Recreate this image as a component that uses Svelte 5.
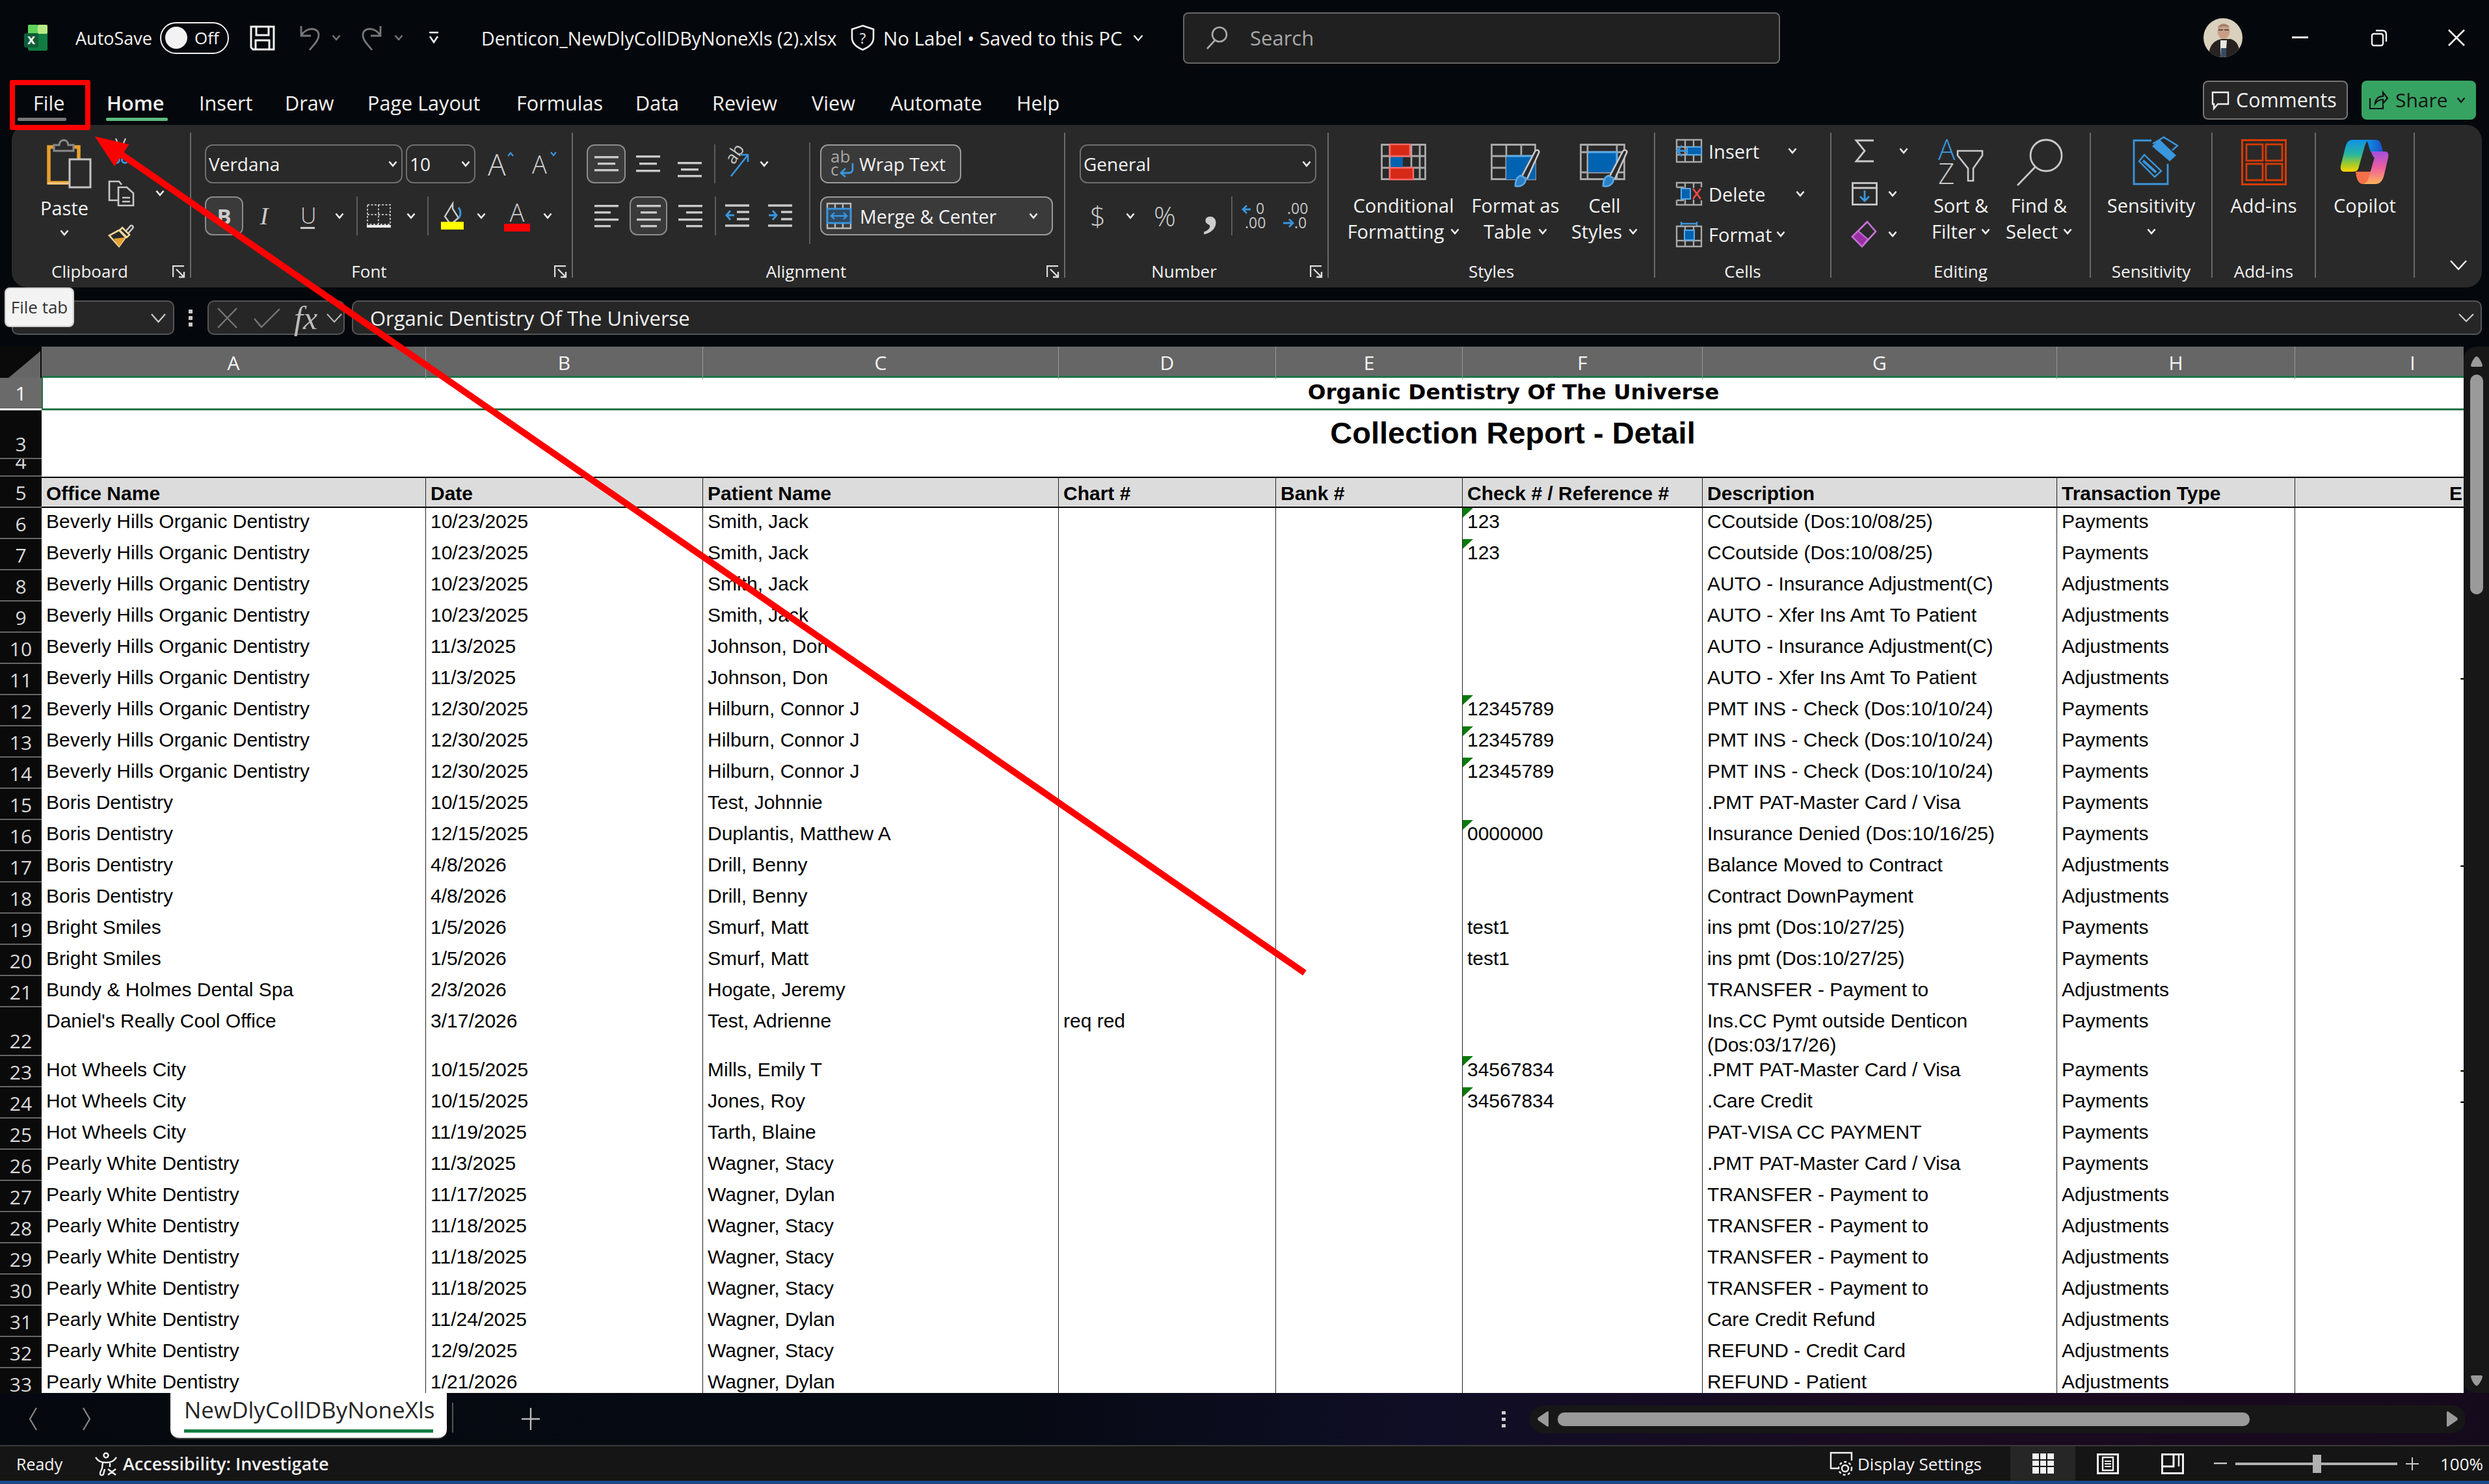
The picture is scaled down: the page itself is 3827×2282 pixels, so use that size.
<script>
  const tabs = [
    { t: 'File', x: 51, file: true }, { t: 'Home', x: 164, on: true }, { t: 'Insert', x: 306 }, { t: 'Draw', x: 438 },
    { t: 'Page Layout', x: 565 }, { t: 'Formulas', x: 794 }, { t: 'Data', x: 977 }, { t: 'Review', x: 1095 },
    { t: 'View', x: 1248 }, { t: 'Automate', x: 1369 }, { t: 'Help', x: 1563 }
  ];
  const cols = ['A', 'B', 'C', 'D', 'E', 'F', 'G', 'H', 'I'];
  const heads = ['Office Name', 'Date', 'Patient Name', 'Chart #', 'Bank #', 'Check # / Reference #', 'Description', 'Transaction Type'];
  const BH = 'Beverly Hills Organic Dentistry', PW = 'Pearly White Dentistry', HW = 'Hot Wheels City', BD = 'Boris Dentistry', BS = 'Bright Smiles';
  const AD = 'Adjustments', PA = 'Payments', TR = 'TRANSFER - Payment to';
  const rows = [
    [6, BH, '10/23/2025', 'Smith, Jack', '', '', '123', 'CCoutside (Dos:10/08/25)', PA, 1],
    [7, BH, '10/23/2025', 'Smith, Jack', '', '', '123', 'CCoutside (Dos:10/08/25)', PA, 1],
    [8, BH, '10/23/2025', 'Smith, Jack', '', '', '', 'AUTO - Insurance Adjustment(C)', AD],
    [9, BH, '10/23/2025', 'Smith, Jack', '', '', '', 'AUTO - Xfer Ins Amt To Patient', AD],
    [10, BH, '11/3/2025', 'Johnson, Don', '', '', '', 'AUTO - Insurance Adjustment(C)', AD],
    [11, BH, '11/3/2025', 'Johnson, Don', '', '', '', 'AUTO - Xfer Ins Amt To Patient', AD, 0, 1],
    [12, BH, '12/30/2025', 'Hilburn, Connor J', '', '', '12345789', 'PMT INS - Check (Dos:10/10/24)', PA, 1],
    [13, BH, '12/30/2025', 'Hilburn, Connor J', '', '', '12345789', 'PMT INS - Check (Dos:10/10/24)', PA, 1],
    [14, BH, '12/30/2025', 'Hilburn, Connor J', '', '', '12345789', 'PMT INS - Check (Dos:10/10/24)', PA, 1],
    [15, BD, '10/15/2025', 'Test, Johnnie', '', '', '', '.PMT PAT-Master Card / Visa', PA],
    [16, BD, '12/15/2025', 'Duplantis, Matthew A', '', '', '0000000', 'Insurance Denied (Dos:10/16/25)', PA, 1],
    [17, BD, '4/8/2026', 'Drill, Benny', '', '', '', 'Balance Moved to Contract', AD, 0, 1],
    [18, BD, '4/8/2026', 'Drill, Benny', '', '', '', 'Contract DownPayment', AD],
    [19, BS, '1/5/2026', 'Smurf, Matt', '', '', 'test1', 'ins pmt (Dos:10/27/25)', PA],
    [20, BS, '1/5/2026', 'Smurf, Matt', '', '', 'test1', 'ins pmt (Dos:10/27/25)', PA],
    [21, 'Bundy & Holmes Dental Spa', '2/3/2026', 'Hogate, Jeremy', '', '', '', TR, AD],
    [22, "Daniel's Really Cool Office", '3/17/2026', 'Test, Adrienne', 'req red', '', '', 'Ins.CC Pymt outside Denticon\n(Dos:03/17/26)', PA],
    [23, HW, '10/15/2025', 'Mills, Emily T', '', '', '34567834', '.PMT PAT-Master Card / Visa', PA, 1, 1],
    [24, HW, '10/15/2025', 'Jones, Roy', '', '', '34567834', '.Care Credit', PA, 1, 1],
    [25, HW, '11/19/2025', 'Tarth, Blaine', '', '', '', 'PAT-VISA CC PAYMENT', PA],
    [26, PW, '11/3/2025', 'Wagner, Stacy', '', '', '', '.PMT PAT-Master Card / Visa', PA],
    [27, PW, '11/17/2025', 'Wagner, Dylan', '', '', '', TR, AD],
    [28, PW, '11/18/2025', 'Wagner, Stacy', '', '', '', TR, AD],
    [29, PW, '11/18/2025', 'Wagner, Stacy', '', '', '', TR, AD],
    [30, PW, '11/18/2025', 'Wagner, Stacy', '', '', '', TR, AD],
    [31, PW, '11/24/2025', 'Wagner, Dylan', '', '', '', 'Care Credit Refund', AD],
    [32, PW, '12/9/2025', 'Wagner, Stacy', '', '', '', 'REFUND - Credit Card', AD],
    [33, PW, '1/21/2026', 'Wagner, Dylan', '', '', '', 'REFUND - Patient', AD]
  ];
</script>

{#snippet chev(m)}
  <svg class="ic {m}" width="14" height="10" viewBox="0 0 14 10"><path d="M1.5 1.5 7 8l5.5-6.5" fill="none" stroke="#f2f2f2" stroke-width="2.6"/></svg>
{/snippet}
{#snippet launcher()}
  <svg class="launch" width="20" height="20" viewBox="0 0 20 20"><path d="M1 18V1h17M6 6l12 12M18 10v8h-8" fill="none" stroke="#ddd" stroke-width="2.4"/></svg>
{/snippet}
{#snippet bars(m, list, h)}
  <svg class="ic {m}" width="37" height={h} viewBox="0 0 37 {h}">
    {#each list as b}<rect x={b[0]} y={b[1]} width={b[2]} height="3.4" fill="#c9c9c9"/>{/each}
  </svg>
{/snippet}

<div class="app">
  <!-- title bar -->
  <header class="titlebar">
    <svg class="ic m37" width="38" height="40" viewBox="0 0 38 40">
      <rect x="6" y="0" width="30" height="40" rx="3" fill="#107c41"/>
      <rect x="6" y="0" width="15" height="14" rx="2" fill="#5fd35a"/>
      <rect x="21" y="0" width="15" height="14" rx="2" fill="#b8e986"/>
      <rect x="0" y="13" width="22" height="22" rx="3" fill="#0e5c38"/>
      <text x="11" y="30" text-anchor="middle" class="xl">x</text>
    </svg>
    <span class="tt s27 m41 w112">AutoSave</span>
    <div class="toggle m18"><i></i><span>Off</span></div>
    <svg class="ic m32" width="40" height="39" viewBox="0 0 40 39"><path d="M2 2h35v35H5l-3-3zM10 2v13h19V2M9 37V23h21v14" fill="none" stroke="#f2f2f2" stroke-width="3"/></svg>
    <svg class="ic m34" width="35" height="40" viewBox="0 0 35 40"><path d="M5 2v15h15M5 17C12 3 33 3 32 17c-.5 8-8 14-14 22" fill="none" stroke="#777" stroke-width="2.8"/></svg>
    <svg class="ic m17" width="14" height="10" viewBox="0 0 14 10"><path d="M1.5 1.5 7 8l5.5-6.5" fill="none" stroke="#777" stroke-width="2.4"/></svg>
    <svg class="ic m31" width="35" height="40" viewBox="0 0 35 40"><path d="M30 2v15H15M30 17C23 3 2 3 3 17c.5 8 8 14 14 22" fill="none" stroke="#777" stroke-width="2.8"/></svg>
    <svg class="ic m16" width="14" height="10" viewBox="0 0 14 10"><path d="M1.5 1.5 7 8l5.5-6.5" fill="none" stroke="#777" stroke-width="2.4"/></svg>
    <svg class="ic m39" width="16" height="20" viewBox="0 0 16 20"><path d="M1 2h14M2 8l6 9 6-9" fill="none" stroke="#f2f2f2" stroke-width="2.6"/></svg>
    <span class="tt s286 m65 w547">Denticon_NewDlyCollDByNoneXls (2).xlsx</span>
    <svg class="ic m21" width="37" height="40" viewBox="0 0 37 40"><path d="M18.500 1.500 35 7v13c0 9-8 15-16.500 18.500C10 35 2 29 2 20V7z" fill="none" stroke="#f2f2f2" stroke-width="2.6"/><text x="18.500" y="29" text-anchor="middle" class="q">?</text></svg>
    <span class="tt s295 m13 w369">No Label • Saved to this PC</span>
    <svg class="ic m15" width="16" height="11" viewBox="0 0 16 11"><path d="M1.500 1.500 8 9l6.500-7.500" fill="none" stroke="#f2f2f2" stroke-width="2.4"/></svg>
    <div class="search m61">
      <svg class="ic" width="34" height="36" viewBox="0 0 34 36"><circle cx="21" cy="13" r="11" fill="none" stroke="#aaa" stroke-width="2.6"/><path d="M14 22 2 35" stroke="#aaa" stroke-width="2.6"/></svg>
      <span>Search</span>
    </div>
    <svg class="ic m651" width="60" height="60" viewBox="0 0 60 60">
      <defs><clipPath id="av"><circle cx="30" cy="30" r="30"/></clipPath></defs>
      <g clip-path="url(#av)">
        <rect width="60" height="60" fill="#d9d0bd"/>
        <path d="M8 60c0-18 8-26 20-28l14 0c10 3 14 12 14 28z" fill="#26221f"/>
        <path d="M26 34h10l-2 26h-8z" fill="#e8e8e8"/><path d="M27 46h8v14h-9z" fill="#3a4a63"/>
        <ellipse cx="31" cy="20" rx="9.500" ry="12" fill="#c89f86"/>
        <path d="M22 14c2-6 16-6 18 0-5-2-13-2-18 0z" fill="#9a7a62"/>
        <path d="M23 18h7M32 18h7" stroke="#333" stroke-width="1.500"/>
      </g>
    </svg>
    <svg class="ic m76" width="25" height="4" viewBox="0 0 25 4"><rect width="25" height="3" fill="#f2f2f2"/></svg>
    <svg class="ic m96" width="26" height="26" viewBox="0 0 26 26"><rect x="2" y="7" width="17" height="18" rx="3" fill="none" stroke="#f2f2f2" stroke-width="2.400"/><path d="M8 2h10c4 0 6 2 6 6v11" fill="none" stroke="#f2f2f2" stroke-width="2.400"/></svg>
    <svg class="ic m93" width="26" height="26" viewBox="0 0 26 26"><path d="M1 1l24 24M25 1 1 25" stroke="#f2f2f2" stroke-width="2.600"/></svg>
  </header>

  <!-- tabs -->
  <nav class="tabs">
    {#each tabs as tab, i}
      <span class="tab" class:on={tab.on} class:file={tab.file} style="width:{i < tabs.length - 1 ? tabs[i + 1].x - tab.x : 90}px">{tab.t}</span>
    {/each}
    <div class="comments"><svg class="ic" width="28" height="28" viewBox="0 0 28 28"><path d="M2 2h24v18H10l-6 7v-7H2z" fill="none" stroke="#f2f2f2" stroke-width="2.400"/></svg><span>Comments</span></div>
    <div class="share"><svg class="ic" width="30" height="30" viewBox="0 0 30 30"><path d="M2 12v16h20v-6M10 20c1-8 6-11 12-11V3l7 9-7 8v-6c-5 0-9 2-12 6z" fill="none" stroke="#121212" stroke-width="2.200"/></svg><span>Share</span><svg class="ic m14" width="14" height="10" viewBox="0 0 14 10"><path d="M1.500 1.500 7 8l5.500-6.500" fill="none" stroke="#121212" stroke-width="2.400"/></svg></div>
  </nav>

  <!-- ribbon -->
  <section class="ribbon">
    <div class="group g-clip">
      <div class="body clip">
        <div class="paste">
          <svg class="ic" width="68" height="75" viewBox="0 0 68 75">
            <path d="M3 12h46v55H3z" fill="none" stroke="#e79f2e" stroke-width="5.500"/>
            <path d="M1 68h32" stroke="#f6c784" stroke-width="3"/>
            <path d="M11 18V9h8c1-10 13-10 14 0h8v9z" fill="#2a2a2a" stroke="#8a8a8a" stroke-width="3"/>
            <rect x="35" y="31" width="32" height="43" fill="#2a2a2a" stroke="#c4c4c4" stroke-width="3"/>
          </svg>
          <div class="paste-l"><span>Paste</span>{@render chev('')}</div>
        </div>
        <div class="clip2">
          <svg class="ic m7" width="25" height="39" viewBox="0 0 25 39"><path d="M5 0l12 28M20 0 8 28" stroke="#c8c8c8" stroke-width="2.200"/><circle cx="6" cy="33" r="4.500" fill="none" stroke="#3a96dd" stroke-width="3"/><circle cx="19" cy="33" r="4.500" fill="none" stroke="#3a96dd" stroke-width="3"/></svg>
          <div class="copyrow">
            <svg class="ic" width="40" height="40" viewBox="0 0 40 40"><path d="M15 31H2V2h15l4 5M16 11h13l10 9v19H16z" fill="#2a2a2a" stroke="#c8c8c8" stroke-width="2.600"/><path d="M22 27h12M22 33h12" stroke="#c8c8c8" stroke-width="2.600"/></svg>
            {@render chev('m33')}
          </div>
          <svg class="ic" width="40" height="38" viewBox="0 0 40 38"><path d="M27 13l7-8c2-3 6 0 4 3l-7 8" fill="none" stroke="#c8c8c8" stroke-width="2.600"/><path d="M22 7 33 18l-4 4L18 11z" fill="none" stroke="#f0d79a" stroke-width="2.600"/><path d="M17 11 2 19l15 17 10-14z" fill="none" stroke="#f0d79a" stroke-width="2.600"/><path d="M9 24l18-2-10 14z" fill="#e79f2e"/></svg>
        </div>
      </div>
      <div class="glabel lp34">Clipboard</div>
      {@render launcher()}
    </div>

    <div class="group g-font">
      <div class="body pad21">
        <div class="row60">
          <div class="box w304"><span>Verdana</span>{@render chev('')}</div>
          <div class="box w107 m5"><span>10</span>{@render chev('')}</div>
          <span class="bigA m19 w38">A<svg class="caret" width="10" height="8" viewBox="0 0 10 8"><path d="M1 7l4-5 4 5" fill="none" stroke="#3a96dd" stroke-width="2.200"/></svg></span>
          <span class="smA m30 w36">A<svg class="caret" width="10" height="8" viewBox="0 0 10 8"><path d="M1 1l4 5 4-5" fill="none" stroke="#3a96dd" stroke-width="2.200"/></svg></span>
        </div>
        <div class="row60 mt20">
          <div class="toggled w59 bold-b">B</div>
          <span class="italic m22 w20">I</span>
          <span class="under m46 w22">U</span>
          {@render chev('m31')}
          <i class="vsep m19"></i>
          <svg class="ic m14" width="37" height="37" viewBox="0 0 37 37"><rect x="1" y="1" width="35" height="30" fill="none" stroke="#bbb" stroke-width="2" stroke-dasharray="3 2.500"/><path d="M18 1v30M1 16h35" stroke="#bbb" stroke-width="2" stroke-dasharray="3 2.500"/><rect y="32" width="37" height="4" fill="#f2f2f2"/></svg>
          {@render chev('m24')}
          <i class="vsep m18"></i>
          <svg class="ic m19" width="35" height="42" viewBox="0 0 35 42"><path d="M18 2 6 22l9 12 12-10L18 10z" fill="none" stroke="#ccc" stroke-width="2.400"/><path d="M27 8c3 4 4 10 1 16" fill="none" stroke="#3a96dd" stroke-width="3"/><rect x="0" y="30" width="35" height="12" fill="#ffff00"/></svg>
          {@render chev('m20')}
          <div class="fcolor m28"><span>A</span><i></i></div>
          {@render chev('m20')}
        </div>
      </div>
      <div class="glabel lp38">Font</div>
      {@render launcher()}
    </div>

    <div class="group g-align">
      <div class="body pad21 alignbody">
        <div class="alignL">
          <div class="row60">
            <div class="toggled w60">{@render bars('', [[0,0,37],[5,10,27],[0,20,37]], 24)}</div>
            {@render bars('m16', [[0,0,37],[5,11,27],[0,22,37]], 26)}
            {@render bars('m27 low', [[0,0,37],[5,10,27],[0,20,37]], 24)}
            <i class="vsep m19"></i>
            <svg class="ic m14" width="40" height="40" viewBox="0 0 40 40"><text x="10" y="22" class="abrot" transform="rotate(-55 12 18)">ab</text><path d="M10 39 36 6M25 6h11v11" fill="none" stroke="#3a96dd" stroke-width="2.600"/></svg>
            {@render chev('m14')}
          </div>
          <div class="row60 mt20">
            {@render bars('m12', [[0,0,37],[0,10,25],[0,21,37],[0,31,25]], 35)}
            <div class="toggled w58 m17">{@render bars('', [[0,0,37],[6,10,25],[0,21,37],[6,31,25]], 35)}</div>
            {@render bars('m17', [[0,0,37],[12,10,25],[0,21,37],[12,31,25]], 35)}
            <i class="vsep m19"></i>
            <svg class="ic m14" width="37" height="36" viewBox="0 0 37 36"><path d="M0 2h37M18 12h19M18 23h19M0 33h37" stroke="#c9c9c9" stroke-width="3.400"/><path d="M14 17H3M8 10l-6 7 6 7" fill="none" stroke="#3a96dd" stroke-width="3"/></svg>
            <svg class="ic m29" width="37" height="36" viewBox="0 0 37 36"><path d="M0 2h37M20 12h17M20 23h17M0 33h37" stroke="#c9c9c9" stroke-width="3.400"/><path d="M1 17h11M7 10l6 7-6 7" fill="none" stroke="#3a96dd" stroke-width="3"/></svg>
          </div>
        </div>
        <i class="vsep-tall"></i>
        <div class="alignR">
          <div class="btnline w217">
            <svg class="ic m14" width="38" height="42" viewBox="0 0 38 42"><text x="0" y="19" class="wrp">ab</text><text x="0" y="39" class="wrp">c</text><path d="M34 20v9c0 5-3 6-7 6H17M23 28l-7 7 7 6" fill="none" stroke="#3a96dd" stroke-width="2.800"/></svg>
            <span class="m6">Wrap Text</span>
          </div>
          <div class="btnline w358 mt20">
            <svg class="ic m8" width="38" height="40" viewBox="0 0 38 40"><path d="M1 1h36v38H1zM13 1v8M25 1v8M13 31v8M25 31v8" fill="none" stroke="#bbb" stroke-width="2.400"/><rect x="1" y="9" width="36" height="22" fill="#2f4a63" stroke="#3a96dd" stroke-width="2.800"/><path d="M7 20h24M12 15l-5 5 5 5M26 15l5 5-5 5" fill="none" stroke="#3a96dd" stroke-width="2.400"/></svg>
            <span class="m13 w260 s286">Merge &amp; Center</span>
            {@render chev('')}
          </div>
        </div>
      </div>
      <div class="glabel lp38">Alignment</div>
      {@render launcher()}
    </div>

    <div class="group g-num">
      <div class="body pad22">
        <div class="row60"><div class="box w364"><span>General</span>{@render chev('')}</div></div>
        <div class="row60 mt20">
          <span class="sym m15 w26">$</span>
          {@render chev('m30')}
          <span class="sym m25 w42">%</span>
          <span class="comma m38 w20">,</span>
          <i class="vsep m23"></i>
          <svg class="ic m14" width="37" height="42" viewBox="0 0 37 42"><path d="M14 11H2M8 5 2 11l6 6" fill="none" stroke="#3a96dd" stroke-width="2.800"/><text x="22" y="18" class="dec">0</text><text x="5" y="40" class="dec">.00</text></svg>
          <svg class="ic m27" width="38" height="42" viewBox="0 0 38 42"><text x="6" y="18" class="dec">.00</text><path d="M0 32h14M9 26l6 6-6 6" fill="none" stroke="#3a96dd" stroke-width="2.800"/><text x="17" y="40" class="dec">.0</text></svg>
        </div>
      </div>
      <div class="glabel lp38">Number</div>
      {@render launcher()}
    </div>

    <div class="group g-styles">
      <div class="body flexr pad42">
        <div class="big pt17 w146">
          <div class="big-ico h75">
            <svg class="ic" width="70" height="56" viewBox="0 0 70 56"><path d="M1.500 1.500h67v53h-67zM14 1v54M47 1v54M60 1v54M1 19h68M1 37h68" fill="none" stroke="#a9a9a9" stroke-width="2.800"/><rect x="14" y="1" width="31" height="18" fill="#d62a17" stroke="#ff6b6b" stroke-width="2.400"/><rect x="15" y="21" width="19" height="15" fill="#0063b1"/><rect x="14" y="37" width="36" height="18" fill="#d62a17" stroke="#ff6b6b" stroke-width="2.400"/></svg>
          </div>
          <div class="l2">Conditional</div>
          <div class="l2">Formatting{@render chev('m10')}</div>
        </div>
        <div class="big pt17 w156 m21">
          <div class="big-ico h75">
            <svg class="ic" width="76" height="67" viewBox="0 0 76 67"><path d="M1.500 1.500h67v53h-67zM24 1v54M47 1v54M1 19h68M1 37h68" fill="none" stroke="#a9a9a9" stroke-width="2.800"/><rect x="24" y="19" width="45" height="36" fill="#0063b1"/><path d="M24 19h45" stroke="#5aa9e6" stroke-width="3"/><path d="M48 50 68 12c2-4 8-2 6 2L56 54" fill="#2a2a2a" stroke="#c8c8c8" stroke-width="2.600"/><path d="M46 49c-6 2-8 8-8 16 8 2 16-2 16-12z" fill="#2a7fc8" stroke="#5aa9e6" stroke-width="2.600"/></svg>
          </div>
          <div class="l2">Format as</div>
          <div class="l2">Table{@render chev('m10')}</div>
        </div>
        <div class="big pt17 w118">
          <div class="big-ico h75">
            <svg class="ic" width="76" height="67" viewBox="0 0 76 67"><path d="M1.500 1.500h67v53h-67zM12 1v54M57 1v54M1 13h68M1 44h68" fill="none" stroke="#a9a9a9" stroke-width="2.800"/><rect x="13" y="13" width="44" height="31" fill="#0063b1"/><path d="M13 13h44v31" fill="none" stroke="#5aa9e6" stroke-width="3"/><path d="M46 50 66 12c2-4 8-2 6 2L54 54" fill="#2a2a2a" stroke="#c8c8c8" stroke-width="2.600"/><path d="M44 49c-6 2-8 8-8 16 8 2 16-2 16-12z" fill="#2a7fc8" stroke="#5aa9e6" stroke-width="2.600"/></svg>
          </div>
          <div class="l2">Cell</div>
          <div class="l2">Styles{@render chev('m10')}</div>
        </div>
      </div>
      <div class="glabel">Styles</div>
    </div>

    <div class="group g-cells">
      <div class="body cells">
        <div class="cellrow">
          <svg class="ic m32" width="40" height="36" viewBox="0 0 40 36"><path d="M1 1h38v34H1zM14 1v34M27 1v34M1 12h38M1 24h38" fill="none" stroke="#a9a9a9" stroke-width="2.400"/><rect x="17" y="12" width="22" height="12" fill="#0063b1" stroke="#5aa9e6" stroke-width="2"/><path d="M17 18H2M9 10 2 18l7 8" fill="none" stroke="#3a96dd" stroke-width="3"/></svg>
          <span class="m10 w122">Insert</span>{@render chev('')}
        </div>
        <div class="cellrow mt30">
          <svg class="ic m32" width="40" height="36" viewBox="0 0 40 36"><path d="M1 8V1h38v7M1 28v7h38v-7M14 1v8M27 1v8M14 27v8M27 27v8M1 8h11M1 28h11" fill="none" stroke="#a9a9a9" stroke-width="2.400"/><rect x="8" y="10" width="14" height="16" fill="#0063b1" stroke="#5aa9e6" stroke-width="2"/><path d="M26 10l12 16M38 10 26 26" stroke="#f04a4a" stroke-width="2.800"/></svg>
          <span class="m10 w134">Delete</span>{@render chev('')}
        </div>
        <div class="cellrow mt26">
          <svg class="ic m32" width="40" height="40" viewBox="0 0 40 40"><path d="M8 1v8M32 1v8M8 4h24" fill="none" stroke="#3a96dd" stroke-width="2.400"/><path d="M1 8h38v31H1zM14 8v31M27 8v31M1 30h38" fill="none" stroke="#a9a9a9" stroke-width="2.400"/><rect x="13" y="14" width="15" height="15" fill="#0063b1" stroke="#5aa9e6" stroke-width="2"/></svg>
          <span class="m10 w104">Format</span>{@render chev('')}
        </div>
      </div>
      <div class="glabel">Cells</div>
    </div>

    <div class="group g-edit">
      <div class="body flexr">
        <div class="editL">
          <div class="cellrow">
            <svg class="ic m36" width="30" height="36" viewBox="0 0 30 36"><path d="M29 2H2l13 16L2 34h27" fill="none" stroke="#c9c9c9" stroke-width="2.800"/></svg>
            {@render chev('m38')}
          </div>
          <div class="cellrow mt30">
            <svg class="ic m31" width="40" height="36" viewBox="0 0 40 36"><rect x="1.500" y="1.500" width="37" height="33" fill="none" stroke="#c9c9c9" stroke-width="2.800"/><path d="M1 9h38" stroke="#c9c9c9" stroke-width="2.800"/><path d="M20 13v16M13 22l7 7 7-7" fill="none" stroke="#3a96dd" stroke-width="2.800"/></svg>
            {@render chev('m16')}
          </div>
          <div class="cellrow mt26">
            <svg class="ic m31" width="38" height="40" viewBox="0 0 38 40"><path d="M24 1 37 16 16 39 1 24z" fill="none" stroke="#c774d6" stroke-width="2.600"/><path d="M10 15 25 28 16 39 1 24z" fill="#9a2fa8" stroke="#c774d6" stroke-width="2"/></svg>
            {@render chev('m18')}
          </div>
        </div>
        <div class="big pt11 w110">
          <div class="big-ico h81">
            <svg class="ic" width="70" height="69" viewBox="0 0 70 69"><text x="0" y="31" class="az blue">A</text><text x="0" y="68" class="az">Z</text><path d="M30 17h38v7L54 44v19h-8V44L30 24z" fill="none" stroke="#c9c9c9" stroke-width="2.600"/></svg>
          </div>
          <div class="l2">Sort &amp;</div>
          <div class="l2">Filter{@render chev('m8')}</div>
        </div>
        <div class="big pt10 w130">
          <div class="big-ico h82">
            <svg class="ic" width="71" height="72" viewBox="0 0 71 72"><ellipse cx="46" cy="25" rx="24" ry="24" fill="none" stroke="#c9c9c9" stroke-width="2.800"/><path d="M29 43 2 71" stroke="#c9c9c9" stroke-width="2.800"/></svg>
          </div>
          <div class="l2">Find &amp;</div>
          <div class="l2">Select{@render chev('m8')}</div>
        </div>
      </div>
      <div class="glabel">Editing</div>
    </div>

    <div class="group g-sens">
      <div class="body">
        <div class="big pt6">
          <div class="big-ico h86">
            <svg class="ic m14" width="70" height="74" viewBox="0 0 70 74"><path d="M28 6H1v67h52V42" fill="none" stroke="#3a96dd" stroke-width="2.800"/><path d="M30 11 47 1l21 13-8 7" fill="none" stroke="#3a96dd" stroke-width="2.400"/><path d="M29 15 56 38 66 29 40 4z" fill="#3a96dd"/><path d="M9 38 17 28 43 53 33 62z" fill="#2a2a2a" stroke="#3a96dd" stroke-width="2.400"/><path d="M15 37l20 18" stroke="#3a96dd" stroke-width="4"/></svg>
          </div>
          <div class="l2">Sensitivity</div>
          <div class="l2">{@render chev('')}</div>
        </div>
      </div>
      <div class="glabel">Sensitivity</div>
    </div>

    <div class="group g-add">
      <div class="body">
        <div class="big pt10">
          <div class="big-ico h82">
            <svg class="ic" width="70" height="71" viewBox="0 0 70 71"><rect x="1.500" y="1.500" width="67" height="68" fill="none" stroke="#d83b01" stroke-width="3"/><g fill="none" stroke="#d83b01" stroke-width="2.800"><rect x="8" y="8" width="25" height="25"/><rect x="38" y="8" width="25" height="25"/><rect x="8" y="38" width="25" height="25"/><rect x="38" y="38" width="25" height="25"/></g></svg>
          </div>
          <div class="l2">Add-ins</div>
        </div>
      </div>
      <div class="glabel">Add-ins</div>
    </div>

    <div class="group g-cop">
      <div class="body">
        <div class="big pt11">
          <div class="big-ico h81">
            <svg class="ic" width="74" height="68" viewBox="0 0 74 68">
              <defs>
                <linearGradient id="c1" x1="0" y1="0" x2="0" y2="1"><stop offset="0" stop-color="#1092e6"/><stop offset=".45" stop-color="#28b5a0"/><stop offset=".75" stop-color="#9ccb2e"/><stop offset="1" stop-color="#ffd400"/></linearGradient>
                <linearGradient id="c2" x1="0" y1="0" x2="0" y2="1"><stop offset="0" stop-color="#a44ee0"/><stop offset=".5" stop-color="#ee5f9c"/><stop offset="1" stop-color="#ffb35a"/></linearGradient>
                <linearGradient id="c3" x1="0" y1="0" x2="1" y2="0"><stop offset="0" stop-color="#1092e6"/><stop offset="1" stop-color="#1b4fc4"/></linearGradient>
              </defs>
              <path d="M40 0h14c7 0 8 6 11 18H46C42 8 42 3 40 0z" fill="url(#c3)"/>
              <path d="M23 49h30c-2 10-4 19-16 19H34c-8 0-10-10-11-19z" fill="#f5704a"/>
              <path d="M18 0h26c-4 1-6 6-8 13l-8 28c-1 5-3 8-9 8H6c-5 0-7-4-6-9L7 12C9 4 12 0 18 0z" fill="url(#c1)"/>
              <path d="M46 18h22c5 0 6 4 5 9l-6 26c-2 9-6 15-14 15H34c6-1 8-6 10-13l8-28c-2 1-4-7-6-9z" fill="url(#c2)"/>
            </svg>
          </div>
          <div class="l2">Copilot</div>
        </div>
      </div>
    </div>
    <div class="expander"><svg class="ic" width="26" height="16" viewBox="0 0 26 16"><path d="M1 1l12 13L25 1" fill="none" stroke="#f2f2f2" stroke-width="2.400"/></svg></div>
  </section>

  <!-- formula bar -->
  <div class="fbar">
    <div class="fbox namebox"><svg class="ic" width="23" height="14" viewBox="0 0 23 14"><path d="M1 1l10.500 12L22 1" fill="none" stroke="#ccc" stroke-width="2.200"/></svg></div>
    <svg class="ic m22" width="6" height="26" viewBox="0 0 6 26"><rect width="6" height="6" fill="#c9c9c9"/><rect y="10" width="6" height="6" fill="#c9c9c9"/><rect y="20" width="6" height="6" fill="#c9c9c9"/></svg>
    <div class="fbox btnbox m23">
      <svg class="ic m13" width="31" height="32" viewBox="0 0 31 32"><path d="M1 1l29 30M30 1 1 31" stroke="#777" stroke-width="2.400"/></svg>
      <svg class="ic m25" width="41" height="30" viewBox="0 0 41 30"><path d="M1 16l11 13L40 1" fill="none" stroke="#777" stroke-width="2.400"/></svg>
      <span class="fx m21">fx</span>
      <svg class="ic m13" width="24" height="14" viewBox="0 0 24 14"><path d="M1 1l11 12L23 1" fill="none" stroke="#bbb" stroke-width="2"/></svg>
    </div>
    <div class="fbox finput m11"><span>Organic Dentistry Of The Universe</span><svg class="ic" width="24" height="14" viewBox="0 0 24 14"><path d="M1 1l11 11L23 1" fill="none" stroke="#ccc" stroke-width="2.200"/></svg></div>
  </div>

  <!-- sheet -->
  <div class="sheetwrap">
    <div class="sheet">
      <div class="grow colhead">
        <div class="corner"><svg width="50" height="42" viewBox="0 0 50 42"><path d="M50 0V42H0z" fill="#666"/></svg></div>
        {#each cols as c}<div class="ch">{c}</div>{/each}
        <div class="ch"></div>
      </div>
      <div class="grow r1">
        <div class="rh sel">1</div>
        <div class="title1">Organic Dentistry Of The Universe</div>
      </div>
      <div class="grow r2"><div class="rh"></div><div class="blank"></div></div>
      <div class="grow r3">
        <div class="rh">3</div>
        <div class="title2">Collection Report - Detail</div>
      </div>
      <div class="grow r4"><div class="rh">4</div><div class="blank"></div></div>
      <div class="grow r5">
        <div class="rh">5</div>
        {#each heads as h}<div class="hc">{h}</div>{/each}
        <div class="hc hcE">E</div>
        <div class="hc"></div>
      </div>
      {#each rows as r}
        <div class="grow data" class:tall={r[0] === 22}>
          <div class="rh">{r[0]}</div>
          {#each r.slice(1, 9) as v, j}
            <div class="dc" class:tri={j === 5 && r[9]}>{v}</div>
          {/each}
          <div class="dc dash">{r[10] ? '-' : ''}</div>
          <div class="dc"></div>
        </div>
      {/each}
    </div>
    <div class="vscroll">
      <svg class="ic" width="20" height="17" viewBox="0 0 20 17"><path d="M10 1c3 0 8 9 9 14 0 1-1 2-2 2H3c-1 0-2-1-2-2C2 10 7 1 10 1z" fill="#9a9a9a"/></svg>
      <div class="vthumb"></div>
      <svg class="ic vdown" width="20" height="17" viewBox="0 0 20 17"><path d="M10 16c-3 0-8-9-9-14 0-1 1-2 2-2h14c1 0 2 1 2 2-1 5-6 14-9 14z" fill="#9a9a9a"/></svg>
    </div>
  </div>

  <!-- sheet tabs -->
  <div class="sheettabs">
    <svg class="ic m44" width="14" height="36" viewBox="0 0 14 36"><path d="M12 1 2 18l10 17" fill="none" stroke="#888" stroke-width="2.200"/></svg>
    <svg class="ic m68" width="14" height="36" viewBox="0 0 14 36"><path d="M2 1l10 17L2 35" fill="none" stroke="#888" stroke-width="2.200"/></svg>
    <div class="stab m122"><span>NewDlyCollDByNoneXls</span><i></i></div>
    <i class="tabsep m8"></i>
    <svg class="ic m102" width="34" height="34" viewBox="0 0 34 34"><path d="M17 0v34M3 17h28" stroke="#bbb" stroke-width="2.400"/></svg>
    <svg class="ic m1476" width="6" height="25" viewBox="0 0 6 25"><rect width="6" height="5" fill="#ccc"/><rect y="10" width="6" height="5" fill="#ccc"/><rect y="20" width="6" height="5" fill="#ccc"/></svg>
    <div class="hscroll m37">
      <svg class="ic m12" width="18" height="24" viewBox="0 0 18 24"><path d="M17 1v22c0 1-2 1-3 0L1 14c-1-1-1-3 0-4L14 1c1-1 3-1 3 0z" fill="#9a9a9a"/></svg>
      <div class="hthumb m13"></div>
      <svg class="ic m303" width="17" height="24" viewBox="0 0 17 24"><path d="M0 1v22c0 1 2 1 3 0l13-9c1-1 1-3 0-4L3 1C2 0 0 0 0 1z" fill="#9a9a9a"/></svg>
    </div>
  </div>

  <!-- status bar -->
  <footer class="status">
    <span class="ready w120">Ready</span>
    <svg class="ic" width="36" height="36" viewBox="0 0 36 36"><circle cx="18" cy="5" r="3.500" fill="none" stroke="#f2f2f2" stroke-width="2.400"/><path d="M2 8c4 6 8 8 16 8s12-2 16-8M13 16l-1 8c-1 5-4 6-3 10 1 2 4 2 5 0l2-8M24 17v6M21 26l12 9M33 26l-12 9" fill="none" stroke="#f2f2f2" stroke-width="2.400"/></svg>
    <span class="acc m8">Accessibility: Investigate</span>
    <div class="statusR">
      <svg class="ic" width="36" height="38" viewBox="0 0 36 38"><path d="M13 26H2V2h32v12" fill="none" stroke="#f2f2f2" stroke-width="2.400"/><circle cx="24" cy="26" r="5" fill="none" stroke="#f2f2f2" stroke-width="2.400"/><circle cx="24" cy="26" r="10" fill="none" stroke="#f2f2f2" stroke-width="2.400" stroke-dasharray="4 3.500"/></svg>
      <span class="m7 w188">Display Settings</span>
      <div class="viewon m47"><svg class="ic" width="33" height="31" viewBox="0 0 33 31"><path d="M0 0h33v31H0z" fill="#f2f2f2"/><path d="M11 0v31M22 0v31M0 10h33M0 20h33" stroke="#151515" stroke-width="2"/></svg></div>
      <svg class="ic m33" width="34" height="32" viewBox="0 0 34 32"><path d="M1.500 1.500h31v29h-31z" fill="none" stroke="#f2f2f2" stroke-width="3"/><path d="M9 6h16v20H9z" fill="none" stroke="#f2f2f2" stroke-width="2.400"/><path d="M12 12h10M12 16h10M12 20h10" stroke="#f2f2f2" stroke-width="2"/></svg>
      <svg class="ic m65" width="35" height="32" viewBox="0 0 35 32"><path d="M1.500 1.500h32v29h-32zM1 20h18V1" fill="none" stroke="#f2f2f2" stroke-width="3"/><path d="M27 1v19" stroke="#f2f2f2" stroke-width="2.400"/></svg>
      <svg class="ic m46" width="20" height="3" viewBox="0 0 20 3"><rect width="20" height="2.400" fill="#c9c9c9"/></svg>
      <div class="slider m13"><i></i></div>
      <svg class="ic m13" width="20" height="20" viewBox="0 0 20 20"><path d="M10 0v20M0 10h20" stroke="#c9c9c9" stroke-width="2"/></svg>
      <span class="m33 w64">100%</span>
    </div>
  </footer>
  <div class="strip"></div>

  <!-- annotation overlay -->
  <div class="redbox"></div>
  <svg class="arrow" width="3827" height="2282" viewBox="0 0 3827 2282">
    <path d="M176 230 2006 1496" stroke="#ff0000" stroke-width="10"/>
    <path d="M149 212 196 223 176 253z" fill="#ff0000" stroke="#ff0000" stroke-width="3"/>
  </svg>
  <div class="tooltip">File tab</div>
</div>

<style>
  :global(body) { margin: 0; background: #05080d; }
  .app {
    position: relative; width: 3827px; height: 2282px; overflow: hidden; color: #f2f2f2;
    font-family: "Open Sans", "Noto Sans", sans-serif; font-size: 29px;
    background:
      linear-gradient(180deg, #04070b 0%, #04070b 62%, rgba(4,7,11,0) 92%),
      linear-gradient(90deg, #05090f 0%, #060a12 40%, #0f0e26 57%, #1a0a20 78%, #150a1c 100%);
  }
  .ic { display: block; flex: none; overflow: visible; }
  i { display: block; }
  .m5{margin-left:5px}.m6{margin-left:6px}.m7{margin-left:7px}.m8{margin-left:8px}.m10{margin-left:10px}.m11{margin-left:11px}.m12{margin-left:12px}.m13{margin-left:13px}.m14{margin-left:14px}.m15{margin-left:15px}.m16{margin-left:16px}.m17{margin-left:17px}.m18{margin-left:18px}.m19{margin-left:19px}.m20{margin-left:20px}.m21{margin-left:21px}.m22{margin-left:22px}.m23{margin-left:23px}.m24{margin-left:24px}.m25{margin-left:25px}.m27{margin-left:27px}.m28{margin-left:28px}.m29{margin-left:29px}.m30{margin-left:30px}.m31{margin-left:31px}.m32{margin-left:32px}.m33{margin-left:33px}.m34{margin-left:34px}.m36{margin-left:36px}.m37{margin-left:37px}.m38{margin-left:38px}.m39{margin-left:39px}.m41{margin-left:41px}.m44{margin-left:44px}.m46{margin-left:46px}.m47{margin-left:47px}.m61{margin-left:61px}.m65{margin-left:65px}.m68{margin-left:68px}.m76{margin-left:76px}.m93{margin-left:93px}.m96{margin-left:96px}.m102{margin-left:102px}.m122{margin-left:122px}.m303{margin-left:303px}.m651{margin-left:651px}.m1476{margin-left:1476px}
  .w20{width:20px}.w22{width:22px}.w26{width:26px}.w36{width:36px}.w38{width:38px}.w42{width:42px}.w58{width:58px}.w59{width:59px}.w60{width:60px}.w64{width:64px}.w104{width:104px}.w107{width:107px}.w110{width:110px}.w112{width:112px}.w118{width:118px}.w120{width:120px}.w122{width:122px}.w130{width:130px}.w134{width:134px}.w146{width:146px}.w156{width:156px}.w188{width:188px}.w217{width:217px}.w260{width:260px}.w304{width:304px}.w358{width:358px}.w364{width:364px}.w369{width:369px}.w547{width:547px}
  .mt20{margin-top:20px}.mt26{margin-top:26px}.mt30{margin-top:30px}
  .s27{font-size:27px}.s286{font-size:28.6px}.s295{font-size:29.5px}

  .titlebar { height: 116px; display: flex; align-items: center; }
  .tt { flex: none; white-space: nowrap; }
  .xl { fill: #fff; font: bold 22px "Liberation Sans", sans-serif; }
  .q { fill: #f2f2f2; font: 22px "Open Sans", sans-serif; }
  .toggle { flex: none; box-sizing: border-box; width: 106px; height: 49px; border: 2.5px solid #f2f2f2; border-radius: 25px; display: flex; align-items: center; padding-left: 6px; }
  .toggle i { width: 34px; height: 34px; border-radius: 50%; background: #f2f2f2; }
  .toggle span { margin-left: 11px; font-size: 26px; }
  .search { flex: none; box-sizing: border-box; width: 918px; height: 79px; background: #202020; border: 2.5px solid #666; border-radius: 8px; display: flex; align-items: center; padding-left: 33px; color: #a8a8a8; }
  .search span { margin-left: 34px; font-size: 31px; }

  .tabs { height: 76px; display: flex; align-items: center; padding-left: 51px; padding-right: 20px; position: relative; }
  .tab { flex: none; font-size: 30.6px; line-height: 40px; margin-top: 7px; box-sizing: border-box; position: relative; }
  .tab.on { font-weight: 600; }
  .tab.on::after { content: ''; position: absolute; left: -1px; top: 43px; width: 95px; height: 5px; border-radius: 2px; background: #5fbb7f; }
  .tab.file::after { content: ''; position: absolute; left: -24px; top: 43px; width: 75px; height: 5px; border-radius: 2px; background: #777; }
  .comments { margin-left: auto; box-sizing: border-box; width: 223px; height: 60px; margin-top: -1px; border: 2.5px solid #777; border-radius: 8px; background: #262626; display: flex; align-items: center; padding-left: 11px; gap: 10px; font-size: 30.4px; flex: none; }
  .share { margin-left: 21px; box-sizing: border-box; width: 176px; height: 60px; margin-top: -1px; border-radius: 8px; background: #37a362; color: #121212; display: flex; align-items: center; padding-left: 11px; gap: 11px; font-size: 30px; flex: none; }
  .share .m14 { margin-left: 2px; }

  .ribbon { box-sizing: border-box; margin: 0 11px 0 18px; height: 250px; border-radius: 24px; background: #292929; display: flex; padding-top: 12px; }
  .group { flex: none; position: relative; box-sizing: border-box; height: 223px; border-right: 2.5px solid #6a6a6a; display: flex; flex-direction: column; }
  .g-clip{width:276px}.g-font{width:587px}.g-align{width:757px}.g-num{width:405px}.g-styles{width:502px}.g-cells{width:271px}.g-edit{width:399px}.g-sens{width:187px}.g-add{width:159px}.g-cop{width:152px}
  .body { height: 198px; box-sizing: border-box; flex: none; }
  .glabel { height: 25px; line-height: 30px; font-size: 26px; text-align: center; white-space: nowrap; }
  .lp34 { padding-right: 34px; } .lp38 { padding-right: 38px; }
  .launch { position: absolute; right: 7px; bottom: -1px; }
  .pad21 { padding: 18px 0 0 21px; } .pad22 { padding: 18px 0 0 22px; } .pad42 { padding-left: 42px; }
  .flexr { display: flex; }
  .row60 { display: flex; align-items: center; height: 60px; }
  .box { flex: none; box-sizing: border-box; height: 60px; border: 2.5px solid #6e6e6e; border-radius: 12px; display: flex; align-items: center; justify-content: space-between; padding: 0 6px 0 4px; font-size: 28px; }
  .toggled { flex: none; box-sizing: border-box; height: 60px; border: 2.5px solid #8c8c8c; border-radius: 12px; background: #3a3a3a; display: flex; align-items: center; justify-content: center; }
  .bold-b { font: bold 33px "Open Sans", sans-serif; color: #ccc; }
  .bigA { flex: none; font-size: 46px; font-weight: 300; color: #d0d0d0; position: relative; line-height: 46px; }
  .smA { flex: none; font-size: 38px; font-weight: 300; color: #d0d0d0; position: relative; line-height: 46px; }
  .caret { position: absolute; right: -2px; top: 4px; }
  .italic { flex: none; text-align: center; font: italic 38px "Liberation Serif", serif; color: #ccc; }
  .under { flex: none; text-align: center; font-size: 34px; font-weight: 300; color: #ccc; border-bottom: 3px solid #ccc; line-height: 36px; }
  .vsep { flex: none; width: 2px; height: 60px; background: #5c5c5c; }
  .vsep-tall { flex: none; width: 2px; height: 156px; margin-top: -3px; background: #5c5c5c; }
  .fcolor { flex: none; width: 40px; display: flex; flex-direction: column; align-items: center; color: #ccc; font-size: 38px; font-weight: 300; line-height: 36px; }
  .fcolor i { width: 40px; height: 12px; background: #f00; }
  .alignbody { display: flex; }
  .alignL { width: 342px; flex: none; }
  .alignR { margin-left: 15px; }
  .low { margin-top: 18px; }
  .abrot { fill: #c9c9c9; font: 26px "Open Sans", sans-serif; }
  .wrp { fill: #a8a8a8; font: 26px "Open Sans", sans-serif; }
  .btnline { box-sizing: border-box; height: 60px; border: 2.5px solid #9a9a9a; border-radius: 12px; background: #3a3a3a; display: flex; align-items: center; font-size: 28px; white-space: nowrap; }
  .sym { flex: none; text-align: center; font-size: 42px; font-weight: 300; color: #ccc; line-height: 50px; }
  .comma { flex: none; text-align: center; font: bold 92px "Liberation Serif", serif; color: #ccc; line-height: 40px; margin-top: -34px; }
  .dec { fill: #c4c4c4; font: 23px "Open Sans", sans-serif; }
  .big { box-sizing: border-box; display: flex; flex-direction: column; align-items: center; flex: none; white-space: nowrap; }
  .pt6{padding-top:6px}.pt10{padding-top:10px}.pt11{padding-top:11px}.pt17{padding-top:17px}
  .big-ico { width: 100%; display: flex; justify-content: center; }
  .h75{height:75px}.h81{height:81px}.h82{height:82px}.h86{height:86px}
  .l2 { height: 40px; line-height: 40px; display: flex; align-items: center; justify-content: center; }
  .clip { display: flex; padding-left: 54px; }
  .paste { width: 68px; flex: none; padding-top: 10px; }
  .paste-l { width: 54px; display: flex; flex-direction: column; align-items: center; height: 80px; line-height: 40px; margin-top: 11px; }
  .paste-l :global(svg) { margin-top: 13px; }
  .clip2 { margin-left: 26px; padding-top: 9px; }
  .copyrow { display: flex; align-items: center; margin: 25px 0 26px; }
  .cells, .editL { padding-top: 10px; }
  .editL { width: 144px; flex: none; }
  .cellrow { height: 36px; display: flex; align-items: center; white-space: nowrap; }
  .expander { flex: 1; display: flex; align-items: flex-end; padding: 0 0 0 54px; box-sizing: border-box; height: 212px; }
  .az { fill: #c9c9c9; font: 300 44px "Open Sans", sans-serif; }
  .az.blue { fill: #3a96dd; }

  .fbar { margin: 20px 11px 0 18px; height: 53px; display: flex; align-items: center; }
  .fbox { flex: none; box-sizing: border-box; height: 53px; background: #262626; border: 2px solid #555; border-radius: 10px; display: flex; align-items: center; }
  .namebox { width: 250px; justify-content: flex-end; padding-right: 11px; }
  .btnbox { width: 211px; }
  .fx { font: italic 50px/48px "Liberation Serif", serif; color: #bbb; width: 37px; flex: none; }
  .finput { flex: 1; justify-content: space-between; padding: 0 10px 0 26px; font-size: 31px; }

  .sheetwrap { margin-top: 18px; height: 1609px; display: flex; }
  .sheet { width: 3788px; height: 1609px; overflow: hidden; flex: none; background: #0a0a0a; }
  .grow { display: grid; grid-template-columns: 64px 591px 426px 547px 334px 287px 369px 545px 366px 362px 697px; color: #000; font-family: "Liberation Sans", Arial, sans-serif; font-size: 30px; }
  .colhead { height: 48px; box-sizing: border-box; border-bottom: 3px solid #217346; background: #666; }
  .corner { background: #0a0a0a; margin-bottom: -3px; display: flex; align-items: flex-end; justify-content: flex-end; padding: 0 2px 4px 0; }
  .ch { box-sizing: border-box; border-right: 1px solid #999; color: #f5f5f5; font: 30px/50px "Open Sans", sans-serif; text-align: center; }
  .rh { box-sizing: border-box; background: #0a0a0a; color: #dadada; border-bottom: 2px solid #666; font: 30px/1 "Open Sans", sans-serif; text-align: center; display: flex; align-items: flex-end; justify-content: center; padding-bottom: 6px; overflow: hidden; }
  .rh.sel { background: #6a6a6a; color: #fff; height: 47px; }
  .r1 { height: 50px; background: #fff; }
  .title1 { grid-column: 2 / -1; box-sizing: border-box; border-bottom: 3px solid #217346; border-left: 2px solid #217346; font: bold 32.7px/44px "DejaVu Sans", Verdana, sans-serif; text-align: center; color: #000; }
  .r2 { height: 3px; }
  .blank { grid-column: 2 / -1; background: #fff; }
  .r3 { height: 72px; }
  .title2 { grid-column: 2 / -1; background: #fff; font: bold 47px/64px "Liberation Sans", Arial, sans-serif; text-align: center; }
  .r4 { height: 27px; }
  .r5 { height: 48px; }
  .hc { box-sizing: border-box; background: #dcdcdc; border-top: 2px solid #000; border-bottom: 2px solid #000; border-right: 1px solid #222; padding: 5px 0 0 7px; font-weight: bold; line-height: 37px; white-space: nowrap; }
  .hcE { padding-left: 237px; }
  .data { height: 48px; }
  .data.tall { height: 75px; }
  .dc { position: relative; box-sizing: border-box; background: #fff; border-right: 1px solid #222; padding: 2px 0 0 7px; line-height: 37px; white-space: pre-line; overflow: hidden; }
  .dc.tri::before { content: ''; position: absolute; left: 0; top: 0; width: 16px; height: 15px; background: #0a7a0a; clip-path: polygon(0 0, 100% 0, 0 100%); }
  .dash { padding-left: 253px; }

  .vscroll { width: 39px; flex: none; background: #171717; border-radius: 20px 0 0 20px; display: flex; flex-direction: column; align-items: center; padding-top: 14px; box-sizing: border-box; }
  .vthumb { width: 20px; height: 338px; margin-top: 12px; background: #9a9a9a; border-radius: 10px; }
  .vdown { margin-top: auto; margin-bottom: 10px; }

  .sheettabs { height: 80px; display: flex; align-items: center; }
  .stab { flex: none; box-sizing: border-box; width: 425px; height: 71px; align-self: flex-start; background: #fff; color: #262626; border-radius: 0 0 14px 14px; border-bottom: 2px solid #444; padding: 0 21px; font-size: 35px; line-height: 52px; white-space: nowrap; overflow: hidden; }
  .stab i { height: 5px; margin-top: 4px; background: #107c41; }
  .tabsep { flex: none; width: 2px; height: 46px; background: #555; margin-top: -4px; }
  .hscroll { flex: none; width: 1439px; height: 43px; border-radius: 22px; background: #171717; display: flex; align-items: center; }
  .hthumb { flex: none; width: 1064px; height: 21px; border-radius: 10px; background: #9a9a9a; }

  .status { box-sizing: border-box; height: 55px; background: #151515; border-top: 2px solid #3a3a3a; display: flex; align-items: center; padding: 0 11px 0 25px; font-size: 26px; white-space: nowrap; }
  .ready { font-size: 25px; }
  .acc { font-weight: 600; font-size: 27px; }
  .statusR { margin-left: auto; display: flex; align-items: center; height: 100%; }
  .viewon { flex: none; width: 100px; height: 100%; background: #262626; display: flex; align-items: center; justify-content: center; }
  .slider { flex: none; position: relative; width: 249px; height: 4px; background: #b0b0b0; }
  .slider i { position: absolute; left: 119px; top: -12px; width: 13px; height: 28px; background: #b0b0b0; }
  .strip { height: 5px; background: #1c4a8a; }

  .redbox { position: absolute; left: 15px; top: 123px; box-sizing: border-box; width: 124px; height: 77px; border: 8px solid #ff0000; border-radius: 3px; }
  .arrow { position: absolute; left: 0; top: 0; pointer-events: none; }
  .tooltip { position: absolute; left: 7px; top: 442px; box-sizing: border-box; width: 107px; height: 61px; border-radius: 8px; border: 2px solid #cfcfcf; background: #f3f3f3; color: #333; font-size: 26px; line-height: 57px; text-align: center; white-space: nowrap; }
</style>
